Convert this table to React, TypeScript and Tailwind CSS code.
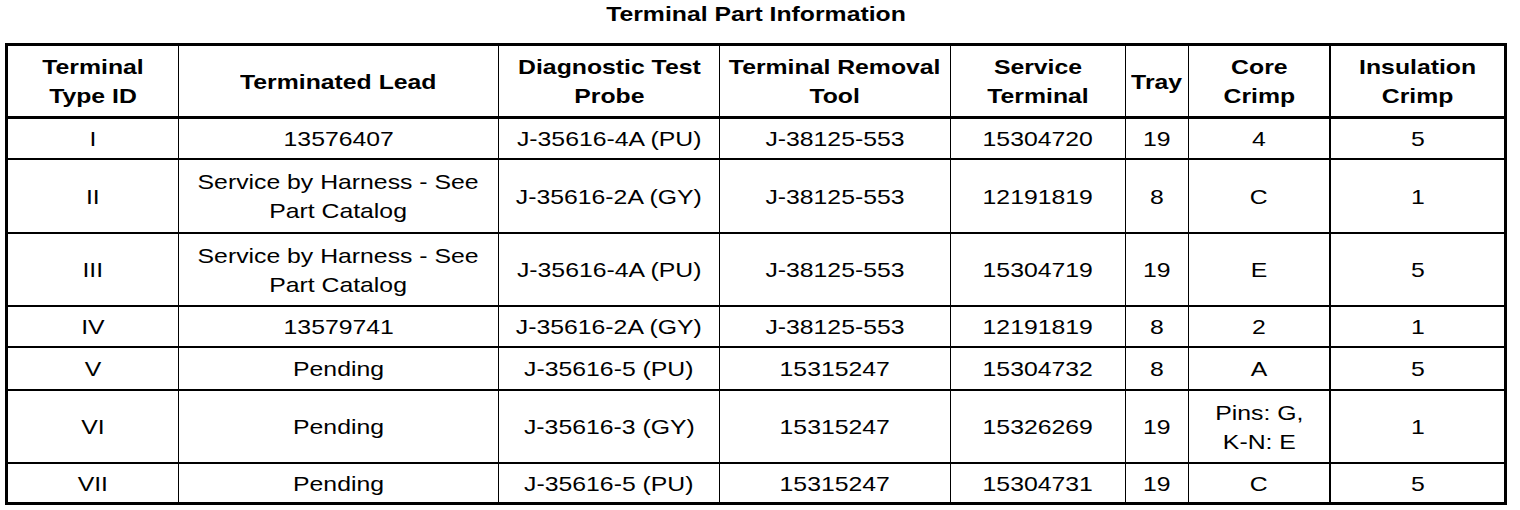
const columns = [
  { w: 'w-[171px]', line: 'border-r' },
  { w: 'w-[320px]', line: 'border-r' },
  { w: 'w-[221px]', line: 'border-r' },
  { w: 'w-[231px]', line: 'border-r' },
  { w: 'w-[175px]', line: 'border-r' },
  { w: 'w-[63px]', line: 'border-r' },
  { w: 'w-[142px]', line: 'border-r-2' },
  { w: 'w-[173px]', line: '' },
];

const header: string[][] = [
  ['Terminal', 'Type ID'],
  ['Terminated Lead'],
  ['Diagnostic Test', 'Probe'],
  ['Terminal Removal', 'Tool'],
  ['Service', 'Terminal'],
  ['Tray'],
  ['Core', 'Crimp'],
  ['Insulation', 'Crimp'],
];

const harness = ['Service by Harness - See', 'Part Catalog'];

// heights include the 2px bottom rule
const rows: { h: string; border: string; cells: (string | string[])[] }[] = [
  { h: 'h-[41px]', border: 'border-b-2', cells: ['I', '13576407', 'J-35616-4A (PU)', 'J-38125-553', '15304720', '19', '4', '5'] },
  { h: 'h-[74px]', border: 'border-b-2', cells: ['II', harness, 'J-35616-2A (GY)', 'J-38125-553', '12191819', '8', 'C', '1'] },
  { h: 'h-[73px]', border: 'border-b-2', cells: ['III', harness, 'J-35616-4A (PU)', 'J-38125-553', '15304719', '19', 'E', '5'] },
  { h: 'h-[41px]', border: 'border-b-2', cells: ['IV', '13579741', 'J-35616-2A (GY)', 'J-38125-553', '12191819', '8', '2', '1'] },
  { h: 'h-[43px]', border: 'border-b-2', cells: ['V', 'Pending', 'J-35616-5 (PU)', '15315247', '15304732', '8', 'A', '5'] },
  { h: 'h-[73px]', border: 'border-b-2', cells: ['VI', 'Pending', 'J-35616-3 (GY)', '15315247', '15326269', '19', ['Pins: G,', 'K-N: E'], '1'] },
  { h: 'h-[38px]', border: '', cells: ['VII', 'Pending', 'J-35616-5 (PU)', '15315247', '15304731', '19', 'C', '5'] },
];

function CellText({ value }: { value: string | string[] }) {
  const lines = Array.isArray(value) ? value : [value];
  return (
    <span className="inline-block scale-x-[1.18] whitespace-nowrap leading-[29px]">
      {lines.map((l, i) => (
        <span key={i} className="block">{l}</span>
      ))}
    </span>
  );
}

export default function App() {
  return (
    <div className="w-[1520px] h-[510px] bg-white text-black font-['Liberation_Sans',Arial,sans-serif] text-[21px]">
      {/* Title */}
      <div className="ml-[5px] w-[1502px] h-[43px] text-center font-bold leading-[28px]">
        <span className="inline-block scale-x-[1.18]">Terminal Part Information</span>
      </div>

      {/* Table */}
      <div className="ml-[5px] w-[1502px] border-[3px] border-black flex flex-col">
        <div className="flex h-[73px] border-b-[3px] border-black font-bold">
          {header.map((h, i) => (
            <div key={i} className={`${columns[i].w} ${columns[i].line} border-black shrink-0 flex items-center justify-center text-center`}>
              <CellText value={h} />
            </div>
          ))}
        </div>
        {rows.map((row, r) => (
          <div key={r} className={`flex ${row.h} ${row.border} border-black`}>
            {row.cells.map((c, i) => (
              <div key={i} className={`${columns[i].w} ${columns[i].line} border-black shrink-0 flex items-center justify-center text-center`}>
                <CellText value={c} />
              </div>
            ))}
          </div>
        ))}
      </div>
    </div>
  );
}
